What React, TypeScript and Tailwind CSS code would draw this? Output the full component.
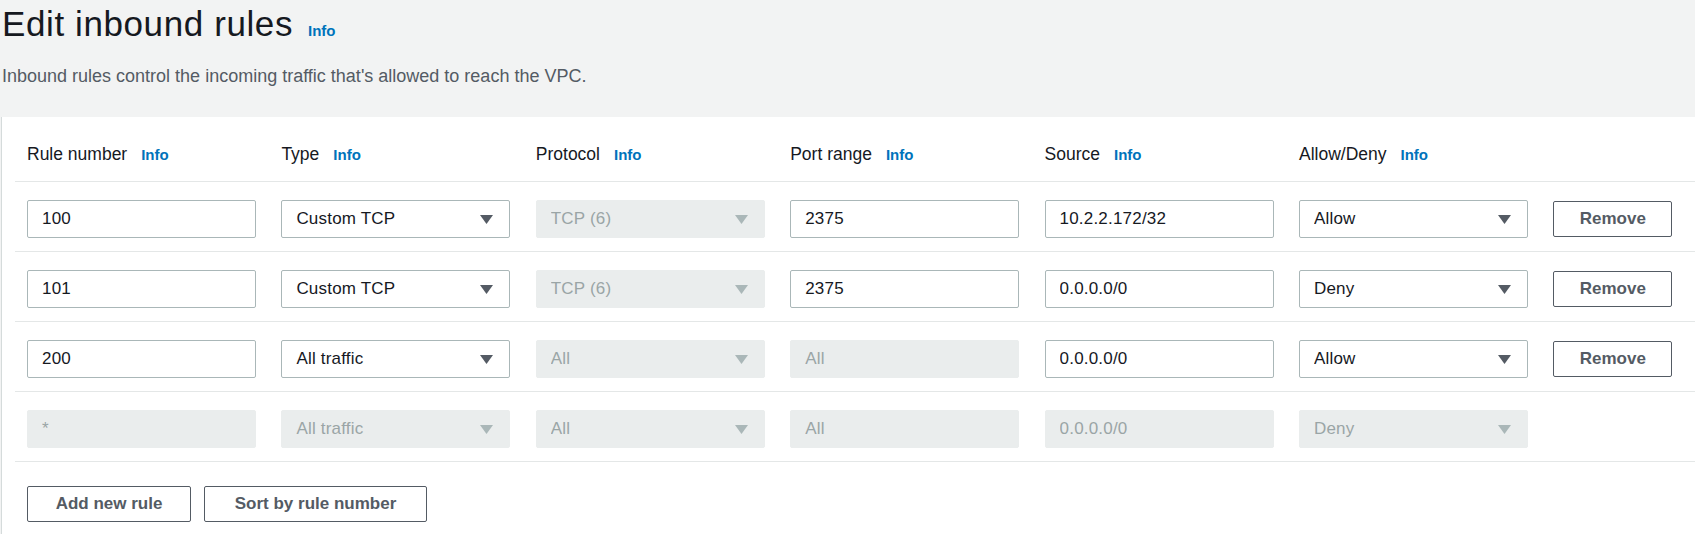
import React from "react"

type Cell =
  | { kind: "input"; value: string; disabled?: boolean }
  | { kind: "select"; value: string; disabled?: boolean }

type Rule = { cells: Cell[]; removable: boolean }

const headers = ["Rule number", "Type", "Protocol", "Port range", "Source", "Allow/Deny"]

const rules: Rule[] = [
  {
    removable: true,
    cells: [
      { kind: "input", value: "100" },
      { kind: "select", value: "Custom TCP" },
      { kind: "select", value: "TCP (6)", disabled: true },
      { kind: "input", value: "2375" },
      { kind: "input", value: "10.2.2.172/32" },
      { kind: "select", value: "Allow" },
    ],
  },
  {
    removable: true,
    cells: [
      { kind: "input", value: "101" },
      { kind: "select", value: "Custom TCP" },
      { kind: "select", value: "TCP (6)", disabled: true },
      { kind: "input", value: "2375" },
      { kind: "input", value: "0.0.0.0/0" },
      { kind: "select", value: "Deny" },
    ],
  },
  {
    removable: true,
    cells: [
      { kind: "input", value: "200" },
      { kind: "select", value: "All traffic" },
      { kind: "select", value: "All", disabled: true },
      { kind: "input", value: "All", disabled: true },
      { kind: "input", value: "0.0.0.0/0" },
      { kind: "select", value: "Allow" },
    ],
  },
  {
    removable: false,
    cells: [
      { kind: "input", value: "*", disabled: true },
      { kind: "select", value: "All traffic", disabled: true },
      { kind: "select", value: "All", disabled: true },
      { kind: "input", value: "All", disabled: true },
      { kind: "input", value: "0.0.0.0/0", disabled: true },
      { kind: "select", value: "Deny", disabled: true },
    ],
  },
]

function Arrow(props: { disabled?: boolean }) {
  return (
    <svg width="13" height="9" viewBox="0 0 13 9" className="shrink-0">
      <path d="M0 0 H13 L6.5 9 Z" fill={props.disabled ? "#aab7b8" : "#545b64"} />
    </svg>
  )
}

function Field(props: { cell: Cell }) {
  const { cell } = props
  const base = "flex h-[38px] w-full items-center rounded-[2px] pl-[14px] pr-[16px] text-[17px]"
  const look = cell.disabled
    ? "bg-[#eaeded] border border-[#eaeded] text-[#9aa5a6]"
    : "bg-white border border-[#aab7b8] text-[#16191f]"
  return (
    <div className={`${base} ${look}`}>
      <span className="flex-1 truncate tracking-[0.2px]">{cell.value}</span>
      {cell.kind === "select" && <Arrow disabled={cell.disabled} />}
    </div>
  )
}

function Info() {
  return <span className="text-[15px] font-bold tracking-normal text-[#0073bb]">Info</span>
}

function OutlineButton(props: { label: string; width: string }) {
  return (
    <button
      className={`${props.width} h-[36px] rounded-[2px] border border-[#545b64] bg-white text-[17px] font-bold text-[#545b64]`}
    >
      {props.label}
    </button>
  )
}

const grid = "grid grid-cols-[229px_229px_229px_229px_229px_229px_119px] gap-x-[25.4px] pl-[12px]"

export default function App() {
  return (
    <div className="min-h-screen bg-[#f2f3f3] font-['Liberation_Sans',Arial,sans-serif] text-[#16191f]">
      <div className="pl-[2px] pt-[4px]">
        <h1 className="flex items-baseline gap-[15px] text-[35px] leading-[40px] tracking-[0.6px] font-normal">
          Edit inbound rules <Info />
        </h1>
        <p className="mt-[13px] text-[18px] leading-[24px] text-[#545b64]">
          Inbound rules control the incoming traffic that's allowed to reach the VPC.
        </p>
      </div>

      <div className="mt-[29px] ml-[1px] border-l border-[#d5dbdb] bg-white pl-[13px]">
        <div className={`${grid} border-b border-[#e4e7e7] pt-[25px] pb-[14px]`}>
          {headers.map((h) => (
            <div key={h} className="flex items-baseline gap-[14px] text-[17.5px] leading-[24px]">
              {h} <Info />
            </div>
          ))}
        </div>

        {rules.map((r, i) => (
          <div key={i} className={`${grid} items-center border-b border-[#e4e7e7] pt-[18px] pb-[13px]`}>
            {r.cells.map((c, j) => (
              <Field key={j} cell={c} />
            ))}
            {r.removable ? <OutlineButton label="Remove" width="w-[119px]" /> : <div />}
          </div>
        ))}

        <div className="flex gap-[13px] pl-[12px] pt-[24px] pb-[13px]">
          <OutlineButton label="Add new rule" width="w-[164px]" />
          <OutlineButton label="Sort by rule number" width="w-[223px]" />
        </div>
      </div>
    </div>
  )
}
